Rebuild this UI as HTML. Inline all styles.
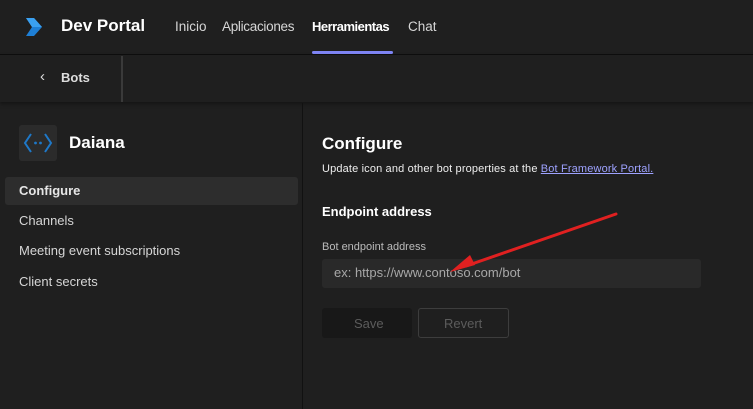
<!DOCTYPE html><html><head><style>
body{margin:0;width:753px;height:409px;background:#1f1f1f;font-family:"Segoe UI","Liberation Sans",sans-serif;color:#fff;overflow:hidden;position:relative}
.a{position:absolute;white-space:nowrap}
</style></head><body>
<div class="a" style="left:0;top:0;width:753px;height:54px;background:#1f1f1f;border-bottom:1px solid #0e0e0e"></div>
<svg class="a" style="left:24px;top:18px" width="20" height="18" viewBox="0 0 20 18"><path d="M2 0h8l8 9-8 9H2l6-9z" fill="#1e7fd6"/><path d="M2 0h8l8 9H8z" fill="#3aa0f0"/></svg>
<div class="a" style="left:61px;top:16px;font-size:17px;font-weight:bold">Dev Portal</div>
<div class="a" style="left:175px;top:19px;font-size:13.5px;color:#d6d6d6">Inicio</div>
<div class="a" style="left:222px;top:19px;font-size:13.5px;color:#d6d6d6;letter-spacing:-0.3px">Aplicaciones</div>
<div class="a" style="left:312px;top:19px;font-size:13px;font-weight:bold;letter-spacing:-0.5px">Herramientas</div>
<div class="a" style="left:312px;top:51px;width:81px;height:3px;background:#7f85f5;border-radius:2px"></div>
<div class="a" style="left:408px;top:19px;font-size:13.5px;color:#d6d6d6">Chat</div>
<div class="a" style="left:0;top:55px;width:753px;height:47px;background:#1f1f1f;box-shadow:0 2px 4px rgba(0,0,0,.4)"></div>
<div class="a" style="left:121px;top:56px;width:2px;height:46px;background:#3a3a3a"></div>
<div class="a" style="left:40px;top:68px;font-size:15px;color:#ddd">&#8249;</div>
<div class="a" style="left:61px;top:70px;font-size:13px;font-weight:bold;color:#ddd">Bots</div>
<div class="a" style="left:302px;top:103px;width:1px;height:306px;background:#111"></div>
<div class="a" style="left:19px;top:125px;width:38px;height:36px;background:#2b2b2b;border-radius:3px"></div>
<svg class="a" style="left:23px;top:131px" width="30" height="24" viewBox="0 0 30 24"><path d="M8 3L2 12l6 9M22 3l6 9-6 9" stroke="#1e78c8" stroke-width="2" fill="none"/><circle cx="12.5" cy="12" r="1.4" fill="#1e78c8"/><circle cx="17.5" cy="12" r="1.4" fill="#1e78c8"/></svg>
<div class="a" style="left:69px;top:133px;font-size:17px;font-weight:bold">Daiana</div>
<div class="a" style="left:5px;top:177px;width:293px;height:28px;background:#2d2d2d;border-radius:3px"></div>
<div class="a" style="left:19px;top:183px;font-size:13px;font-weight:bold;color:#e6e6e6">Configure</div>
<div class="a" style="left:19px;top:213px;font-size:13px;color:#d6d6d6">Channels</div>
<div class="a" style="left:19px;top:243px;font-size:13px;color:#d6d6d6">Meeting event subscriptions</div>
<div class="a" style="left:19px;top:274px;font-size:13px;color:#d6d6d6">Client secrets</div>
<div class="a" style="left:322px;top:134px;font-size:17px;font-weight:bold">Configure</div>
<div class="a" style="left:322px;top:163px;font-size:11px;color:#eee;letter-spacing:0.15px">Update icon and other bot properties at the <span style="color:#9ea2ff;text-decoration:underline">Bot Framework Portal.</span></div>
<div class="a" style="left:322px;top:204px;font-size:13px;font-weight:bold">Endpoint address</div>
<div class="a" style="left:322px;top:241px;font-size:11px;color:#bbb">Bot endpoint address</div>
<div class="a" style="left:322px;top:259px;width:379px;height:29px;background:#292929;border-radius:3px"></div>
<div class="a" style="left:334px;top:265px;font-size:13px;color:#a8a8a8">ex: https://www.contoso.com/bot</div>
<div class="a" style="left:322px;top:308px;width:90px;height:30px;background:#181818;border-radius:3px"></div>
<div class="a" style="left:354px;top:316px;font-size:13px;color:#5c5c5c">Save</div>
<div class="a" style="left:418px;top:308px;width:89px;height:28px;border:1px solid #3d3d3d;border-radius:3px"></div>
<div class="a" style="left:444px;top:316px;font-size:13px;color:#5c5c5c">Revert</div>
<svg class="a" style="left:0;top:0" width="753" height="409"><path d="M616 214L466 266" stroke="#e02020" stroke-width="3" stroke-linecap="round"/><path d="M450 272l20-17 5 10z" fill="#e02020"/></svg>
</body></html>
